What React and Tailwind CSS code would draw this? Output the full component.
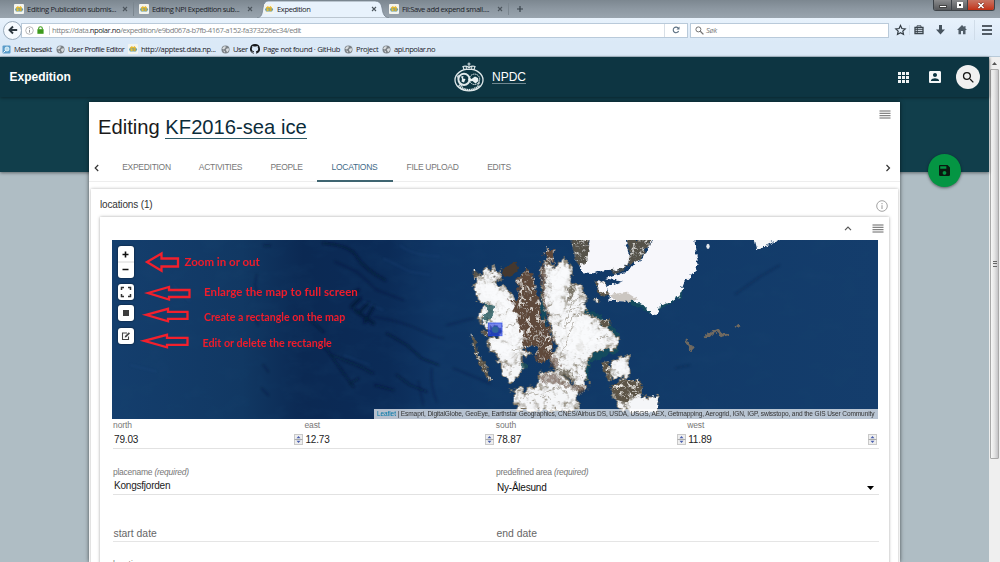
import React from "react";

const Favicon = () => (
  <svg width="10" height="10" viewBox="0 0 10 10" className="shrink-0">
    <rect width="10" height="10" rx="1" fill="#f4f4ee" />
    <path d="M1 5.5C1.5 2 8.5 2 9.2 5.5L8 7.5H2Z" fill="#5e9fb4" />
    <path d="M2 3.5 4 2 5 3.2 6.5 2 8 3.7 7.5 5 5 4.2 2.5 5Z" fill="#e9b92d" />
    <circle cx="3.6" cy="6" r="1.2" fill="#e5bd38" />
    <circle cx="6.6" cy="6" r="1.2" fill="#d8ac32" />
  </svg>
);

const Globe = () => (
  <svg width="9" height="9" viewBox="0 0 9 9" className="shrink-0">
    <circle cx="4.5" cy="4.5" r="4" fill="#7c8287" />
    <path d="M1 3.5 3 1.2 5 1.5 4.2 3.2 2.8 4.4ZM5 4 7.5 3 8 5 6.4 7.3 5.3 6ZM2 5.5 4 6 3.6 7.8Z" fill="#d9dde0" />
  </svg>
);

const CloseX = ({ className }) => (
  <svg width="6" height="6" viewBox="0 0 6 6" className={className}>
    <path d="M1 1 5 5M5 1 1 5" stroke="#4d565e" strokeWidth="1.1" />
  </svg>
);

const Tab = ({ label, className, track }) => (
  <div className={`flex h-[18px] shrink-0 items-center ${className}`}>
    <Favicon />
    <span className={`ml-[3px] grow ${track}`}>{label}</span>
    <CloseX className="shrink-0" />
  </div>
);

const Bookmark = ({ icon, label, className }) => (
  <div className={`flex shrink-0 items-center gap-[3px] ${className}`}>
    {icon}
    <span>{label}</span>
  </div>
);

function Browser() {
  return (
    <div className="h-[57px] w-full font-['Open_Sans','Noto_Sans',sans-serif] text-[7.6px] leading-[10px] text-[#1d2329] whitespace-nowrap">
      <div className="relative flex h-[18px] bg-linear-to-b from-[#7c8790] via-[#8d98a2] to-[#99a4ae]">
        <Tab label="Editing Publication submis..." className="w-[128px] pl-[14px]" track="tracking-[-0.34px]" />
        <div className="ml-[5px] h-[14px] w-px self-center bg-[#7b868f]" />
        <Tab label="Editing NPI Expedition sub..." className="w-[119px] pl-[5px]" track="tracking-[-0.4px]" />
        <div className="relative ml-[4px] flex h-[18px] w-[132px] items-center">
          <svg className="absolute inset-0" width="132" height="18" viewBox="0 0 132 18">
            <path d="M0 18C5 17 5 14 6 8Q7 1 11 1H118Q124 1 125 8C126 14 127 17 132 18Z" fill="#e8f2fc" stroke="#76838e" strokeWidth=".8" />
          </svg>
          <div className="relative flex w-full items-center pl-[7px]">
            <Favicon />
            <span className="ml-[3px] w-[94px] tracking-[-0.4px]">Expedition</span>
            <CloseX />
          </div>
        </div>
        <Tab label="Fil:Save add expend small...." className="w-[114px] pl-[0px]" track="tracking-[-0.4px]" />
        <div className="ml-[5px] h-[12px] w-px self-center bg-[#7b868f]" />
        <svg width="8" height="8" viewBox="0 0 8 8" className="ml-[7px] self-center">
          <path d="M4 1V7M1 4H7" stroke="#39434b" strokeWidth="1.2" />
        </svg>
        <div className="absolute top-0 right-[5px] flex h-[11px] w-[62px] overflow-hidden rounded-b-[3px] border border-t-0 border-[#3c4248]">
          <div className="flex w-[18px] items-center justify-center border-r border-[#3f444a] bg-linear-to-b from-[#8a8b8d] to-[#56585b]">
            <div className="mt-[2px] h-[3px] w-[8px] border border-[#444] bg-white" />
          </div>
          <div className="flex w-[16px] items-center justify-center border-r border-[#3f444a] bg-linear-to-b from-[#8a8b8d] to-[#56585b]">
            <div className="h-[6px] w-[6px] border-2 border-white bg-[#333]" />
          </div>
          <div className="flex grow items-center justify-center bg-linear-to-b from-[#c77462] to-[#c22f12]">
            <svg width="8" height="7" viewBox="0 0 8 7"><path d="M1.500 1 6.500 6M6.500 1 1.500 6" stroke="#6d2a1f" strokeWidth="2.600" /><path d="M1.500 1 6.500 6M6.500 1 1.500 6" stroke="#fff" strokeWidth="1.700" /></svg>
          </div>
        </div>
      </div>

      <div className="flex h-[24px] items-center bg-linear-to-b from-[#e8f2fc] to-[#dbe9f7] pr-[12px]">
        <div className="z-10 ml-[3px] flex h-[19px] w-[19px] shrink-0 items-center justify-center rounded-full border border-[#9aabbb] bg-[#f6fafe]">
          <svg width="10" height="10" viewBox="0 0 10 10"><path d="M9.200 5H2M5 1.500 1.500 5 5 8.500" fill="none" stroke="#2f3940" strokeWidth="1.900" /></svg>
        </div>
        <div className="-ml-px flex h-[15px] w-[667px] shrink-0 items-center border border-[#b9cada] bg-white">
          <svg width="9" height="9" viewBox="0 0 9 9" className="ml-[3px]"><circle cx="4.500" cy="4.500" r="3.800" fill="none" stroke="#9b9b9b" strokeWidth=".7" /><path d="M4.500 3.800V6.600M4.500 2.200V3" stroke="#8a8a8a" strokeWidth=".9" /></svg>
          <svg width="7" height="8" viewBox="0 0 7 8" className="ml-[3px]"><rect x=".4" y="3.200" width="6.200" height="4.600" fill="#3d9a1c" /><path d="M1.700 3.500V2.300a1.800 1.600 0 0 1 3.600 0V3.500" fill="none" stroke="#3d9a1c" strokeWidth="1.100" /></svg>
          <div className="ml-[5px] h-[9px] w-px bg-[#cfd4d8]" />
          <span className="ml-[2px] grow tracking-[-0.45px] text-[#7b7f83]">https://data.<span className="text-[#22272b]">npolar.no</span>/expedition/e9bd067a-b7fb-4167-a152-fa373226ec34/edit</span>
          <div className="h-full w-px bg-[#d8dfe6]" />
          <svg width="8" height="8" viewBox="0 0 8 8" className="mx-[7px]"><path d="M6.400 2.400A2.800 2.800 0 1 0 6.600 5" fill="none" stroke="#5d7183" strokeWidth="1.100" /><path d="M7.500.6V3.600H4.500Z" fill="#5d7183" /></svg>
        </div>
        <div className="ml-[2px] flex h-[15px] w-[199px] shrink-0 items-center border border-[#b9cada] bg-white">
          <svg width="9" height="9" viewBox="0 0 9 9" className="ml-[4px]"><circle cx="3.400" cy="3.400" r="2.500" fill="none" stroke="#737373" strokeWidth="1" /><path d="M5.300 5.300 8.400 8.400" stroke="#737373" strokeWidth="1.300" /></svg>
          <span className="ml-[2px] tracking-[-0.3px] text-[#7d7d7d] italic">Søk</span>
        </div>
        <svg width="100" height="20" viewBox="0 0 100 20" className="ml-[5px] shrink-0">
          <path d="M6.500 5.500 7.900 8.500 11.200 8.900 8.800 11.100 9.500 14.400 6.500 12.700 3.500 14.400 4.200 11.100 1.800 8.900 5.100 8.500Z" fill="none" stroke="#323b43" strokeWidth="1.200" />
          <path d="M15.500 5V15M80.500 0V20" stroke="#cbd8e4" strokeWidth=".8" />
          <path d="M21 7.500H29V13.500H21Z" fill="#dde8f3" stroke="#3a444c" strokeWidth="1.300" />
          <path d="M23 7V5.800H27V7M21 9.600H29M21 11.500H29M23.300 8V13" fill="none" stroke="#3a444c" strokeWidth=".9" />
          <path d="M45 5H48V9.500H51L46.500 14.500 42 9.500H45Z" fill="#46535e" />
          <path d="M68 5 63 10H64.500V14.300H67V11H69V14.300H71.500V10H73L71.500 8.400V6H70.300V7.200Z" fill="#505d68" />
          <path d="M88 6H98M88 10H98M88 14H98" stroke="#252e36" strokeWidth="1.700" />
        </svg>
      </div>

      <div className="flex h-[15px] items-center border-b border-[#b8cad9] bg-[#dbe9f7] pl-[2px] tracking-[-0.5px]">
        <Bookmark className="w-[54px] tracking-[-0.5px]" label="Mest besøkt" icon={<svg width="9" height="9" viewBox="0 0 9 9"><rect x=".5" y=".5" width="8" height="8" rx="1" fill="#5b9cca" /><circle cx="5" cy="4" r="2" fill="#b9d9ec" stroke="#efffff" strokeWidth=".8" /><path d="M1.500 7.500 3.500 5.500" stroke="#fff" /></svg>} />
        <Bookmark className="w-[72px] tracking-[-0.42px]" label="User Profile Editor" icon={<Globe />} />
        <Bookmark className="w-[93px] tracking-[-0.38px]" label="http://apptest.data.np..." icon={<Favicon />} />
        <Bookmark className="w-[29px]" label="User" icon={<Globe />} />
        <Bookmark className="w-[94px] tracking-[-0.35px]" label="Page not found · GitHub" icon={<svg width="10" height="10" viewBox="0 0 16 16"><path fill="#17191b" d="M8 0a8 8 0 0 0-2.530 15.590c.4.070.55-.17.550-.380v-1.490c-2.230.480-2.700-.940-2.700-.940-.360-.920-.890-1.170-.890-1.170-.730-.490.050-.480.050-.480.810.060 1.230.830 1.230.830.720 1.230 1.870.870 2.330.660.070-.520.280-.870.510-1.070-1.780-.200-3.640-.890-3.640-3.950 0-.870.310-1.590.820-2.150-.080-.200-.360-1.020.080-2.120 0 0 .670-.210 2.200.820a7.600 7.600 0 0 1 4 0c1.530-1.040 2.200-.820 2.200-.820.440 1.100.160 1.920.080 2.120.510.560.820 1.270.820 2.150 0 3.070-1.870 3.750-3.650 3.950.290.250.540.730.540 1.480v2.190c0 .210.150.460.550.380A8 8 0 0 0 8 0Z" /></svg>} />
        <Bookmark className="w-[38px] tracking-[-0.35px]" label="Project" icon={<Globe />} />
        <Bookmark className="tracking-[-0.46px]" label="api.npolar.no" icon={<Globe />} />
      </div>
    </div>
  );
}

const Crest = () => (
  <svg width="32" height="31" viewBox="0 0 32 31">
    <g fill="none" stroke="#dfe8ea">
      <ellipse cx="16" cy="18" rx="14" ry="10.800" strokeWidth="1.300" />
      <path d="M5.500 23.500Q16 32.500 26.500 23.500" strokeWidth="2.200" strokeDasharray="1.300 .6" />
      <path d="M11 7.500 10 4.500Q13 3.500 16 5.500 19 3.500 22 4.500L21 7.500Z" strokeWidth="1.200" />
      <path d="M16 .5V6M14.500 2H17.500M13.300 4V7.500M18.700 4V7.500" strokeWidth="1" />
      <circle cx="11" cy="17.300" r="5.600" strokeWidth="2" />
      <circle cx="21.500" cy="17.300" r="5.200" strokeWidth="1" strokeDasharray="1.500 .5" />
    </g>
    <path d="M8 14.500 10.500 14 10 16.500 12.500 17 11 20.500 8.500 19.500 9 17ZM16 15.500 18.500 17 22 14.500 25 16 25.500 19 22.500 21.500 19.500 19 17 19.500 15 18Z" fill="#e9f0f2" />
    <path d="M4 14 6 12.500 5 17ZM5.500 21.500 8 24 10 25 8 22ZM24 24 27 21 26 19.500Z" fill="#dfe8ea" />
  </svg>
);

const Menu = () => (
  <svg width="12" height="9" viewBox="0 0 12 9" className="shrink-0">
    <path d="M.5 1H11.500M.5 3.300H11.500M.5 5.700H11.500M.5 8H11.500" stroke="#666" strokeWidth="1" />
  </svg>
);

const tabs = [
  ["EXPEDITION", "w-[76px]"],
  ["ACTIVITIES", "w-[72px]"],
  ["PEOPLE", "w-[60px]"],
  ["LOCATIONS", "w-[76px] text-[#3f6a88]"],
  ["FILE UPLOAD", "w-[80px]"],
  ["EDITS", "w-[53px]"],
];

function Terrain() {
  return (
    <svg className="absolute inset-0" width="766" height="179" viewBox="112 240 766 179">
      <defs>
        <linearGradient id="sea" x1="0" x2="1">
          <stop offset="0" stopColor="#143e6d" />
          <stop offset=".17" stopColor="#113863" />
          <stop offset=".25" stopColor="#0b2953" />
          <stop offset=".36" stopColor="#0b2b57" />
          <stop offset=".42" stopColor="#0f3564" />
          <stop offset=".52" stopColor="#103866" />
          <stop offset="1" stopColor="#143d6c" />
        </linearGradient>
        <filter id="seabed" x="0" y="0" width="100%" height="100%">
          <feTurbulence type="fractalNoise" baseFrequency=".035 .06" numOctaves="4" seed="8" />
          <feColorMatrix values="0 0 0 0 .01  0 0 0 0 .06  0 0 0 0 .16  1.600 0 0 0 -.65" />
        </filter>
        <filter id="soft"><feGaussianBlur stdDeviation="2.500" /></filter>
        <filter id="ragged" x="-5%" y="-5%" width="110%" height="110%">
          <feTurbulence type="fractalNoise" baseFrequency=".07" numOctaves="3" seed="4" result="n" />
          <feColorMatrix in="n" values="1 0 0 0 0  0 1 0 0 0  0 0 1 0 0  0 0 0 0 1" result="d" />
          <feDisplacementMap in="SourceGraphic" in2="d" scale="18" xChannelSelector="R" yChannelSelector="G" />
          <feGaussianBlur stdDeviation="1.200" />
        </filter>
        <filter id="rock" x="-5%" y="-5%" width="110%" height="110%">
          <feTurbulence type="fractalNoise" baseFrequency=".065 .04" numOctaves="4" seed="12" result="n" />
          <feColorMatrix in="n" values="1 0 0 0 0  0 1 0 0 0  0 0 1 0 0  0 0 0 0 1" result="d" />
          <feColorMatrix in="n" values="0 0 0 0 .3  0 0 0 0 .27  0 0 0 0 .21  0 3.500 0 0 -1.750" result="c" />
          <feComposite in="c" in2="SourceGraphic" operator="in" result="spots" />
          <feMorphology in="SourceAlpha" operator="erode" radius="4" result="core" />
          <feFlood floodColor="#7d725f" result="brown" />
          <feComposite in="brown" in2="SourceAlpha" operator="in" result="rim" />
          <feComposite in="SourceGraphic" in2="core" operator="in" result="inner" />
          <feMerge result="m"><feMergeNode in="rim" /><feMergeNode in="inner" /><feMergeNode in="spots" /></feMerge>
          <feDisplacementMap in="m" in2="d" scale="32" xChannelSelector="R" yChannelSelector="G" />
          <feGaussianBlur stdDeviation="1.200" />
        </filter>
        <filter id="islet" x="-10%" y="-5%" width="120%" height="110%">
          <feTurbulence type="fractalNoise" baseFrequency=".08" numOctaves="4" seed="3" result="n" />
          <feColorMatrix in="n" values="1 0 0 0 0  0 1 0 0 0  0 0 1 0 0  0 0 0 0 1" result="d" />
          <feColorMatrix in="n" values="0 0 0 0 .85  0 0 0 0 .83  0 0 0 0 .78  0 4 0 0 -2.100" result="c" />
          <feComposite in="c" in2="SourceGraphic" operator="in" result="spots" />
          <feMerge result="m"><feMergeNode in="SourceGraphic" /><feMergeNode in="spots" /></feMerge>
          <feDisplacementMap in="m" in2="d" scale="16" xChannelSelector="R" yChannelSelector="G" />
          <feGaussianBlur stdDeviation="1.200" />
        </filter>
        <filter id="snowy" x="-5%" y="-5%" width="110%" height="110%">
          <feTurbulence type="fractalNoise" baseFrequency=".08 .06" numOctaves="4" seed="6" result="n" />
          <feColorMatrix in="n" values="1 0 0 0 0  0 1 0 0 0  0 0 1 0 0  0 0 0 0 1" result="d" />
          <feColorMatrix in="n" values="0 0 0 0 .74  0 0 0 0 .7  0 0 0 0 .66  0 4 0 0 -2.050" result="c" />
          <feComposite in="c" in2="SourceGraphic" operator="in" result="spots" />
          <feMerge result="m"><feMergeNode in="SourceGraphic" /><feMergeNode in="spots" /></feMerge>
          <feDisplacementMap in="m" in2="d" scale="26" xChannelSelector="R" yChannelSelector="G" />
          <feGaussianBlur stdDeviation="1.300" />
        </filter>
      </defs>
      <rect x="112" y="240" width="766" height="179" fill="url(#sea)" />
      <rect x="112" y="240" width="766" height="179" filter="url(#seabed)" opacity=".28" />

      <g transform="translate(110 235) scale(.33333)">
        <g filter="url(#soft)" fill="none" stroke="#041733" strokeLinecap="round">
          <path d="M640 25Q720 30 740 65T825 135" strokeWidth="7" opacity=".65" />
          <path d="M675 80 740 110 800 165 880 195" strokeWidth="5" opacity=".35" />
          <path d="M720 180 745 165M725 215 750 190M745 235 775 205M765 260 790 215M735 225 790 265" strokeWidth="10" opacity=".7" />
          <path d="M790 245Q880 260 930 285T1000 310" strokeWidth="4" opacity=".35" />
          <path d="M830 295 890 330 935 370 985 390" strokeWidth="5" opacity=".65" />
          <path d="M600 255 640 290M640 335 655 350 690 400 730 455" strokeWidth="6" opacity=".55" />
          <path d="M665 360 740 390 790 415M720 445 745 430M795 450 850 465M860 420 900 450 950 470" strokeWidth="5" opacity=".6" />
          <path d="M965 400Q960 450 980 500M925 440 940 510M1010 270 1090 250M1030 400 1140 445" strokeWidth="4" opacity=".35" />
          <path d="M440 120 435 150 445 180M430 240 445 270M460 390 475 410M455 460 475 480" strokeWidth="5" opacity=".3" />
          <path d="M462 32H480" strokeWidth="5" opacity=".6" />
        </g>
        <g filter="url(#soft)" fill="none" stroke="#26528a" opacity=".25" strokeWidth="5">
          <path d="M820 70 900 110 960 120M760 200 820 225M700 360 780 390M190 150 240 200M60 390 140 410M870 30Q900 60 990 65" />
        </g>
      </g>

      <g transform="translate(440 235) scale(.33333)">
        <g filter="url(#ragged)" fill="#18545a" opacity=".65">
          <path d="M430 215 490 245 540 300 530 350 450 385 445 440 415 425 420 220Z" />
          <path d="M530 185 640 240 725 182 728 145 700 150ZM305 145 325 285 300 230Z" />
        </g>

        <g filter="url(#rock)" fill="#f5f6f8">
          <path d="M103 108 120 125 136 88 150 110 163 88 170 122 185 96 187 128 172 150 208 160 228 200 237 240 260 258 264 300 247 340 272 355 243 380 254 400 225 442 198 432 188 407 165 377 178 370 145 345 142 315 178 305 173 270 132 285 117 250 126 210 108 200 106 160 97 155 109 140Z" />
          <path d="M306 80 330 75 340 98 370 62 400 108 392 148 408 137 433 168 438 238 472 248 502 278 538 310 522 348 470 348 438 384 444 462 410 474 398 434 345 403 328 377 348 345 336 300 322 245 308 195Z" />
          <path d="M216 465 242 452 250 476 288 446 298 410 368 410 374 432 414 458 416 528 230 528Z" />
          <path d="M510 378 562 360 570 424 506 434ZM510 465 560 426 609 456 604 482 655 486 652 528 548 528 530 500Z" />
        </g>
        <g filter="url(#ragged)" fill="#fafbfd" opacity=".8">
          <path d="M120 150 150 140 175 165 205 185 215 225 235 255 240 290 225 330 205 325 190 290 185 250 165 200 130 185Z" />
          <path d="M160 320 205 325 235 340 215 370 185 360 155 340Z" />
          <path d="M335 110 375 90 385 115 375 145 360 200 365 240 345 225 335 170ZM365 250 420 240 455 265 490 305 505 325 455 330 420 360 385 350 365 310Z" />
          <path d="M530 385 550 380 555 410 530 415Z" />
        </g>

        <g filter="url(#snowy)" fill="#5f493b">
          <path d="M243 120 262 98 280 120 287 165 300 195 302 240 327 275 342 325 330 372 300 386 284 367 298 340 275 328 253 352 248 300 233 260 223 220 208 190 228 195 236 155 228 130Z" />
          <path d="M318 42 342 42 342 85 316 80Z" />
          <path d="M300 80 318 85 314 175 328 270 316 230 304 190Z" opacity=".7" />
          <path d="M302 418 350 414 375 445 435 455 430 475 350 445 305 440ZM330 365 355 370 360 400 330 395Z" opacity=".6" />
        </g>
        <path d="M190 98 228 80 234 105 213 126 185 120Z" fill="#44382f" filter="url(#ragged)" />

        <g filter="url(#islet)" fill="#5d5547">
          <path d="M92 298 107 314 117 365 135 380 155 438 145 440 127 402 110 370ZM124 283 148 292 146 308 128 298ZM101 105 111 105 111 131 101 131Z" />
          <path d="M483 383 505 378 514 434 498 427ZM510 453 552 433 604 438 608 478 575 485 555 515 522 480ZM478 258 512 252 508 275 483 272ZM461 188 484 200 470 207Z" />
          <path d="M391 12 447 12 454 55 432 110 408 78ZM560 12 638 12 602 74 553 94 568 50Z" opacity=".9" />
          <path d="M508 98 525 120 557 100 552 83ZM385 160 400 145 410 165 385 200ZM348 400 395 405 405 440 370 430Z" opacity=".75" />
          <path d="M463 136 492 141 508 183 478 178Z" />
        </g>
        <path filter="url(#ragged)" d="M450 5 555 5 568 65 562 90 530 104 500 105 460 115 428 112 418 92 442 75ZM640 5 722 5 766 5 770 60 774 85 758 115 732 145 717 184 690 200 662 208 652 240 635 238 603 202 508 197 510 175 498 160 545 140 496 130 520 120 560 112 582 85 612 65ZM475 138 502 150 497 180 475 167Z" fill="#f7f7fb" />
        <path d="M575 495 600 485 618 505 640 487 654 490 650 530 570 530Z" fill="#f5f6f8" filter="url(#ragged)" />
        <path d="M510 180 560 170 595 193 570 202 520 195Z" fill="#8c7e6c" opacity=".4" filter="url(#ragged)" />
        <g filter="url(#ragged)" fill="#1e545a"><path d="M135 205 165 213 160 240 145 260 120 250 145 230ZM245 385 262 385 260 400 245 405Z" opacity=".8" /></g>
        <g filter="url(#ragged)" fill="none" stroke="#8c8577" strokeWidth="3" opacity=".6">
          <path d="M430 180 400 200 385 230M430 205 395 225 375 265M440 235 400 245 370 280M210 220 190 240M230 265 200 275M180 380 215 390M250 340 215 345M500 300 470 310M400 260 375 330 360 360M310 480 350 455 380 470M240 490 275 475 330 490M440 400 400 385M430 430 395 400" />
        </g>
        <rect x="145" y="264" width="41" height="38" fill="#2d45e6" fillOpacity=".62" stroke="#2a49e8" strokeOpacity=".7" strokeWidth="3" />
        <circle cx="166" cy="284" r="10" fill="#31669c" />
      </g>

      <g transform="translate(650 235) scale(.33333)">
        <path d="M313 10H394L357 28 322 44Z" fill="#f4f6f8" filter="url(#ragged)" />
        <ellipse cx="174" cy="34" rx="5" ry="8" fill="#e6e9ee" />
        <path d="M166 306 190 292 200 288 214 302 238 296M108 315 125 346M258 278 269 271" stroke="#6f6960" strokeWidth="9" fill="none" filter="url(#ragged)" />
        <path d="M255 178 330 125 390 90M75 400 120 390" stroke="#09264e" strokeWidth="6" fill="none" opacity=".4" filter="url(#soft)" />
        <path d="M0 495 20 490 15 525 0 525Z" fill="#f2f4f6" />
      </g>
    </svg>
  );
}

const MapButton = ({ className, children }) => (
  <div className={`flex w-[16px] items-center justify-center rounded-[3px] bg-white shadow-[0_0_2px_rgba(0,0,0,0.7)] ${className}`}>
    {children}
  </div>
);

const Note = ({ className, arrow, text }) => (
  <div className={`absolute flex items-center whitespace-nowrap ${className}`}>
    <svg width="48" height="20" viewBox="0 0 48 20" className="shrink-0 overflow-visible">
      <path d={arrow} fill="none" stroke="#f3202c" strokeWidth="2.300" />
    </svg>
    <span>{text}</span>
  </div>
);

function MapPanel() {
  return (
    <div className="relative h-[179px] w-[766px] shrink-0 overflow-hidden">
      <Terrain />
      <div className="absolute top-[6px] left-[6px] flex flex-col">
        <MapButton className="h-[32px] flex-col">
          <svg width="16" height="32" viewBox="0 0 16 32"><path d="M4.500 8.500H10.500M7.500 5.500V11.500M4.500 23.500H10.500" stroke="#111" strokeWidth="1.600" /><path d="M0 16H16" stroke="#ccc" strokeWidth=".8" /></svg>
        </MapButton>
        <MapButton className="mt-[6px] h-[16px]">
          <svg width="12" height="12" viewBox="0 0 12 12"><path d="M1.500 4V1.500H4M8 1.500H10.500V4M10.500 8V10.500H8M4 10.500H1.500V8" fill="none" stroke="#333" strokeWidth="1.500" /></svg>
        </MapButton>
        <MapButton className="mt-[5px] h-[16px]"><div className="h-[6px] w-[6px] bg-[#3d3d3d]" /></MapButton>
        <MapButton className="mt-[7px] h-[16px]">
          <svg width="10" height="10" viewBox="0 0 10 10"><path d="M6 2H1.500V8.500H7.500V5.500" fill="none" stroke="#444" strokeWidth="1.100" /><path d="M3.700 6.500 4 5 7.800 1.200 9 2.400 5.200 6.200Z" fill="#444" /></svg>
        </MapButton>
      </div>
      <div className="font-[Lato,'Open_Sans',sans-serif] text-[11.500px] leading-[20px] font-bold text-[#f01c2b]">
        <Note className="top-[12px] left-[33px]" arrow="M2 10 16.500 1.500V6.500H33V14.500H16.500V18.800Z" text={<span className="-ml-[8.500px]">Zoom in or out</span>} />
        <Note className="top-[42px] left-[34px] tracking-[0.08px]" arrow="M2 11 23 5V8H43.500V15H23V17.500Z" text={<span className="ml-[10px]">Enlarge the map to full screen</span>} />
        <Note className="top-[67px] left-[32px] text-[10.600px]" arrow="M2 7.800 24 1.800V4.800H43.500V11.800H24V14.300Z" text={<span className="ml-[12px]">Create a rectangle on the map</span>} />
        <Note className="top-[93px] left-[30px] text-[10.750px]" arrow="M2 7.800 25 1.800V4.800H45.500V11.800H25V14.300Z" text={<span className="ml-[12.500px]">Edit or delete the rectangle</span>} />
      </div>
      <div className="absolute right-0 bottom-0 flex h-[10px] w-[504px] items-center bg-white/70 pl-[3px] text-[6.550px] tracking-[-0.115px] whitespace-nowrap text-[#333]">
        <span><span className="text-[#0078a8]">Leaflet</span> | Esmapri, DigitalGlobe, GeoEye, Earthstar Geographics, CNES/Airbus DS, USDA, USGS, AEX, Getmapping, Aerogrid, IGN, IGP, swisstopo, and the GIS User Community</span>
      </div>
    </div>
  );
}

const Spinner = () => (
  <svg width="9" height="11" viewBox="0 0 9 11">
    <rect x=".5" y=".5" width="8" height="10" fill="#eee" stroke="#c9c9c9" />
    <path d="M.5 5.500H8.500" stroke="#aaa" /><path d="M2.500 4.300 4.500 2 6.500 4.300ZM2.500 6.700 4.500 9 6.500 6.700Z" fill="#4a5fae" />
  </svg>
);

const NumberField = ({ label, value }) => (
  <div className="w-[191.400px]">
    <div className="h-[13px] text-[8.500px] leading-[12px] tracking-[-0.1px] text-[#777]">{label}</div>
    <div className="flex h-[14px] items-center justify-between pr-[1.500px] pl-px text-[10px] tracking-[-0.15px] text-[#222]">
      <span>{value}</span>
      <Spinner />
    </div>
  </div>
);

function Page() {
  return (
    <div className="relative flex h-[505px] w-[989px] shrink-0 flex-col bg-[#afbdc4]">
      <div className="h-[115px] shrink-0 bg-[#113e4b] shadow-[0_1px_3px_rgba(0,0,0,0.45)]">
        <header className="flex h-[40px] items-center bg-[#0d3542] text-[12px] text-white shadow-[0_1px_3px_rgba(0,0,0,0.4)]">
          <div className="w-[443px] pl-[9.500px] font-bold">Expedition</div>
          <div className="flex w-[454px] items-center pl-[10px]">
            <Crest />
            <span className="ml-[7px] border-b border-[#6f8790] leading-[12px]">NPDC</span>
          </div>
          <svg width="11" height="11" viewBox="0 0 11 11" className="ml-[1px]"><path d="M0 0H3V3H0ZM4 0H7V3H4ZM8 0H11V3H8ZM0 4H3V7H0ZM4 4H7V7H4ZM8 4H11V7H8ZM0 8H3V11H0ZM4 8H7V11H4ZM8 8H11V11H8Z" fill="#f0f4f5" /></svg>
          <svg width="12" height="12" viewBox="3 3 18 18" className="ml-[20px]"><path fill="#f4f6f7" d="M3 5v14c0 1.100.890 2 2 2h14c1.100 0 2-.900 2-2V5c0-1.100-.900-2-2-2H5c-1.110 0-2 .900-2 2zm12 4c0 1.660-1.340 3-3 3s-3-1.340-3-3 1.340-3 3-3 3 1.340 3 3zm-9 8c0-2 4-3.100 6-3.100s6 1.100 6 3.100v1H6v-1z" /></svg>
          <div className="ml-[15px] flex h-[24px] w-[24px] items-center justify-center rounded-full bg-[#f0f0f0]">
            <svg width="15" height="15" viewBox="0 0 24 24"><path fill="#161616" d="M15.500 14h-.790l-.280-.270A6.470 6.470 0 0 0 16 9.500 6.500 6.500 0 1 0 9.500 16c1.610 0 3.090-.590 4.230-1.570l.270.280v.790l5 4.990L20.490 19l-4.990-5zm-6 0C7.010 14 5 11.990 5 9.500S7.010 5 9.500 5 14 7.010 14 9.500 11.990 14 9.500 14z" /></svg>
          </div>
        </header>
      </div>

      <main className="-mt-[70px] ml-[89px] flex w-[811px] grow flex-col overflow-hidden bg-white shadow-[0_0_4px_rgba(0,0,0,0.6)]">
        <div className="flex h-[52px] shrink-0 justify-between pr-[9.500px] pl-[9px]">
          <h1 className="pt-[13px] text-[20.200px] leading-[24px] text-[#1a1a1a]">
            Editing <span className="inline-block border-b-[1.500px] border-[#2c5966] leading-[22px] text-[#0b2c3a]">KF2016-sea ice</span>
          </h1>
          <div className="pt-[8px]"><Menu /></div>
        </div>
        <nav className="flex h-[28px] shrink-0 items-center border-b border-[#eee] pl-[5px] text-[8.500px] tracking-[-0.3px] text-[#777]">
          <svg width="5" height="8" viewBox="0 0 5 8"><path d="M4.200 1 1.200 4 4.200 7" fill="none" stroke="#333" strokeWidth="1.200" /></svg>
          <div className="ml-[9.500px] flex h-[28px] grow">
            {tabs.map(([t, c]) => (
              <div key={t} className={`flex h-[28px] items-center justify-center ${c} ${t === "LOCATIONS" ? "border-b-2 border-[#3f6571] pt-[2px]" : ""}`}>{t}</div>
            ))}
          </div>
          <svg width="6" height="8" viewBox="0 0 5 8" className="mr-[9px]"><path d="M1 1 4 4 1 7" fill="none" stroke="#333" strokeWidth="1.200" /></svg>
        </nav>

        <section className="mt-[7px] ml-[2px] flex w-[807px] grow flex-col bg-white shadow-[0_0_3px_rgba(0,0,0,0.3)]">
          <div className="flex h-[28px] shrink-0 items-center justify-between pt-[3px] pr-[10px] pl-[9px] text-[10px] tracking-[-0.15px] text-[#333]">
            <span>locations (1)</span>
            <svg width="12" height="12" viewBox="0 0 12 12" className="mt-[3px]"><circle cx="6" cy="6" r="5.300" fill="none" stroke="#999" strokeWidth=".9" /><path d="M6 5.200V9M6 3V4.200" stroke="#999" strokeWidth="1" /></svg>
          </div>
          <div className="ml-[9px] flex w-[789px] grow flex-col bg-white pl-[12px] shadow-[0_0_3px_rgba(0,0,0,0.35)]">
            <div className="flex h-[23px] shrink-0 items-center justify-end pr-[5px]">
              <svg width="8" height="5" viewBox="0 0 8 5" className="mr-[20px]"><path d="M1 4.200 4 1.200 7 4.200" fill="none" stroke="#555" strokeWidth="1.200" /></svg>
              <Menu />
            </div>
            <MapPanel />
            <div className="ml-px flex h-[30px] w-[766px] shrink-0 border-b border-[#e2e2e2] pb-[2px]">
              <NumberField label="north" value="79.03" />
              <NumberField label="east" value="12.73" />
              <NumberField label="south" value="78.87" />
              <NumberField label="west" value="11.89" />
            </div>
            <div className="ml-px flex h-[46px] w-[766px] shrink-0 border-b border-[#e2e2e2] pt-[17px] text-[10px] tracking-[-0.22px] text-[#222]">
              <div className="w-[383px]">
                <div className="text-[8.500px] leading-[12px] tracking-[-0.25px] text-[#777]">placename <i>(required)</i></div>
                <div className="pt-[1px] pl-px leading-[14px]">Kongsfjorden</div>
              </div>
              <div className="w-[383px]">
                <div className="text-[8.500px] leading-[12px] tracking-[-0.25px] text-[#777]">predefined area <i>(required)</i></div>
                <div className="flex items-center justify-between pt-[3px] pr-[5px] pl-px leading-[14px] text-[#111]">
                  <span>Ny-Ålesund</span>
                  <svg width="7" height="4" viewBox="0 0 7 4"><path d="M0 0H7L3.500 4Z" fill="#000" /></svg>
                </div>
              </div>
            </div>
            <div className="ml-px flex h-[47px] w-[766px] shrink-0 items-end border-b border-[#e5e5e5] pb-px pl-[0.500px] text-[10.400px] leading-[13px] text-[#666]">
              <div className="w-[383px]">start date</div>
              <div>end date</div>
            </div>
            <div className="ml-px shrink-0 pt-[16px] text-[8.500px] leading-[12px] text-[#777]">location</div>
          </div>
        </section>
      </main>

      <div className="absolute top-[97px] left-[928px] flex h-[33px] w-[33px] items-center justify-center rounded-full bg-[#049543] shadow-[0_1px_3px_rgba(0,0,0,0.5)]">
        <svg width="11" height="11" viewBox="3 3 18 18"><path fill="#0a1a10" d="M17 3H5c-1.110 0-2 .900-2 2v14c0 1.100.890 2 2 2h14c1.100 0 2-.900 2-2V7l-4-4zm-5 16c-1.660 0-3-1.340-3-3s1.340-3 3-3 3 1.340 3 3-1.340 3-3 3zm3-10H5V5h10v4z" /></svg>
      </div>
    </div>
  );
}

export default function App() {
  return (
    <div className="flex h-[562px] w-[1000px] flex-col overflow-hidden bg-[#dbe9f7] font-['Liberation_Sans',Arial,sans-serif]">
      <Browser />
      <div className="flex h-[505px]">
        <Page />
        <div className="flex w-[11px] flex-col items-center bg-[#efefef]">
          <div className="flex h-[12px] items-center"><svg width="5" height="3" viewBox="0 0 5 3"><path d="M0 3 2.500 0 5 3Z" fill="#555" /></svg></div>
          <div className="flex h-[390px] w-[9px] items-center justify-center rounded-[1px] border border-[#a9a9a9] bg-linear-to-r from-[#f7f7f7] via-[#e4e4e4] to-[#c3c3c6]">
            <div className="h-[6px] w-[4px] border-y border-[#666] pt-[1px]"><div className="h-px bg-[#666]" /></div>
          </div>
        </div>
      </div>
    </div>
  );
}
